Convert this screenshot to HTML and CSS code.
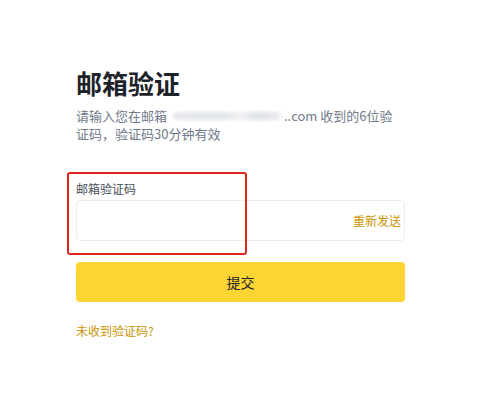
FILE: index.html
```html
<!DOCTYPE html>
<html lang="zh-CN">
<head>
    <meta charset="UTF-8">
    <meta name="viewport" content="width=device-width, initial-scale=1.0">
    <title>邮箱验证</title>
    <link rel="stylesheet" href="styles.css">
</head>
<body>

  <div class="page">
    <h1 class="title">邮箱验证</h1>
    <p class="desc">请输入您在邮箱 <span class="masked"><span class="blur"></span></span>..com 收到的6位验<br>证码，验证码30分钟有效</p>

    <div class="field">
      <label class="label" for="code">邮箱验证码</label>
      <div class="input-wrap">
        <input class="input" type="text" id="code" name="code">
        <a href="#" class="resend">重新发送</a>
      </div>
      <div class="mark"></div>
    </div>

    <button class="submit" type="button">提交</button>

    <a href="#" class="help">未收到验证码?</a>
  </div>

</body>
</html>
```

FILE: styles.css
```css
body {
  margin: 0;
  background: #fff;
  font-family: "Noto Sans CJK SC", "Noto Sans", sans-serif;
  color: #1e2329;
}

.page {
  width: 329px;
  padding: 66px 0 0 76px;
  display: flex;
  flex-direction: column;
}

.title {
  margin: 0;
  font-size: 26px;
  line-height: 34px;
  font-weight: 700;
  color: #1e2329;
}

.desc {
  margin: 7px 0 0;
  font-size: 13px;
  line-height: 17.5px;
  color: #707a8a;
}

.masked {
  display: inline-block;
  width: 114px;
  height: 12px;
  vertical-align: -1px;
  overflow: hidden;
}

.blur {
  display: block;
  margin: 2px 3px;
  height: 8px;
  background: linear-gradient(90deg, #e6e8eb 0%, #dfe2e6 45%, #eef0f2 60%, #dcdfe3 80%, #e8eaed 100%);
  border-radius: 3px;
  filter: blur(2px);
}

.field {
  position: relative;
  margin-top: 39px;
}

.label {
  display: block;
  font-size: 12px;
  line-height: 16px;
  color: #474d57;
}

.input-wrap {
  margin-top: 3px;
  height: 41px;
  border: 1px solid #eaecef;
  border-radius: 4px;
  box-sizing: border-box;
  display: flex;
  align-items: center;
  padding-right: 3px;
}

.input {
  flex: 1;
  border: none;
  outline: none;
  height: 100%;
  background: transparent;
  padding: 0 10px;
  font-size: 14px;
}

.resend {
  font-size: 12px;
  color: #c99400;
  text-decoration: none;
  white-space: nowrap;
}

.mark {
  position: absolute;
  left: -9px;
  top: -9px;
  width: 180px;
  height: 83px;
  border: 2px solid #e0251d;
  border-radius: 3px;
  box-sizing: border-box;
}

.submit {
  margin-top: 21px;
  height: 40px;
  border: none;
  border-radius: 4px;
  background: #fcd535;
  color: #1e2329;
  font-family: inherit;
  font-size: 14px;
  cursor: pointer;
}

.help {
  margin-top: 21px;
  align-self: flex-start;
  font-size: 12px;
  line-height: 16px;
  color: #c99400;
  text-decoration: none;
}
```
